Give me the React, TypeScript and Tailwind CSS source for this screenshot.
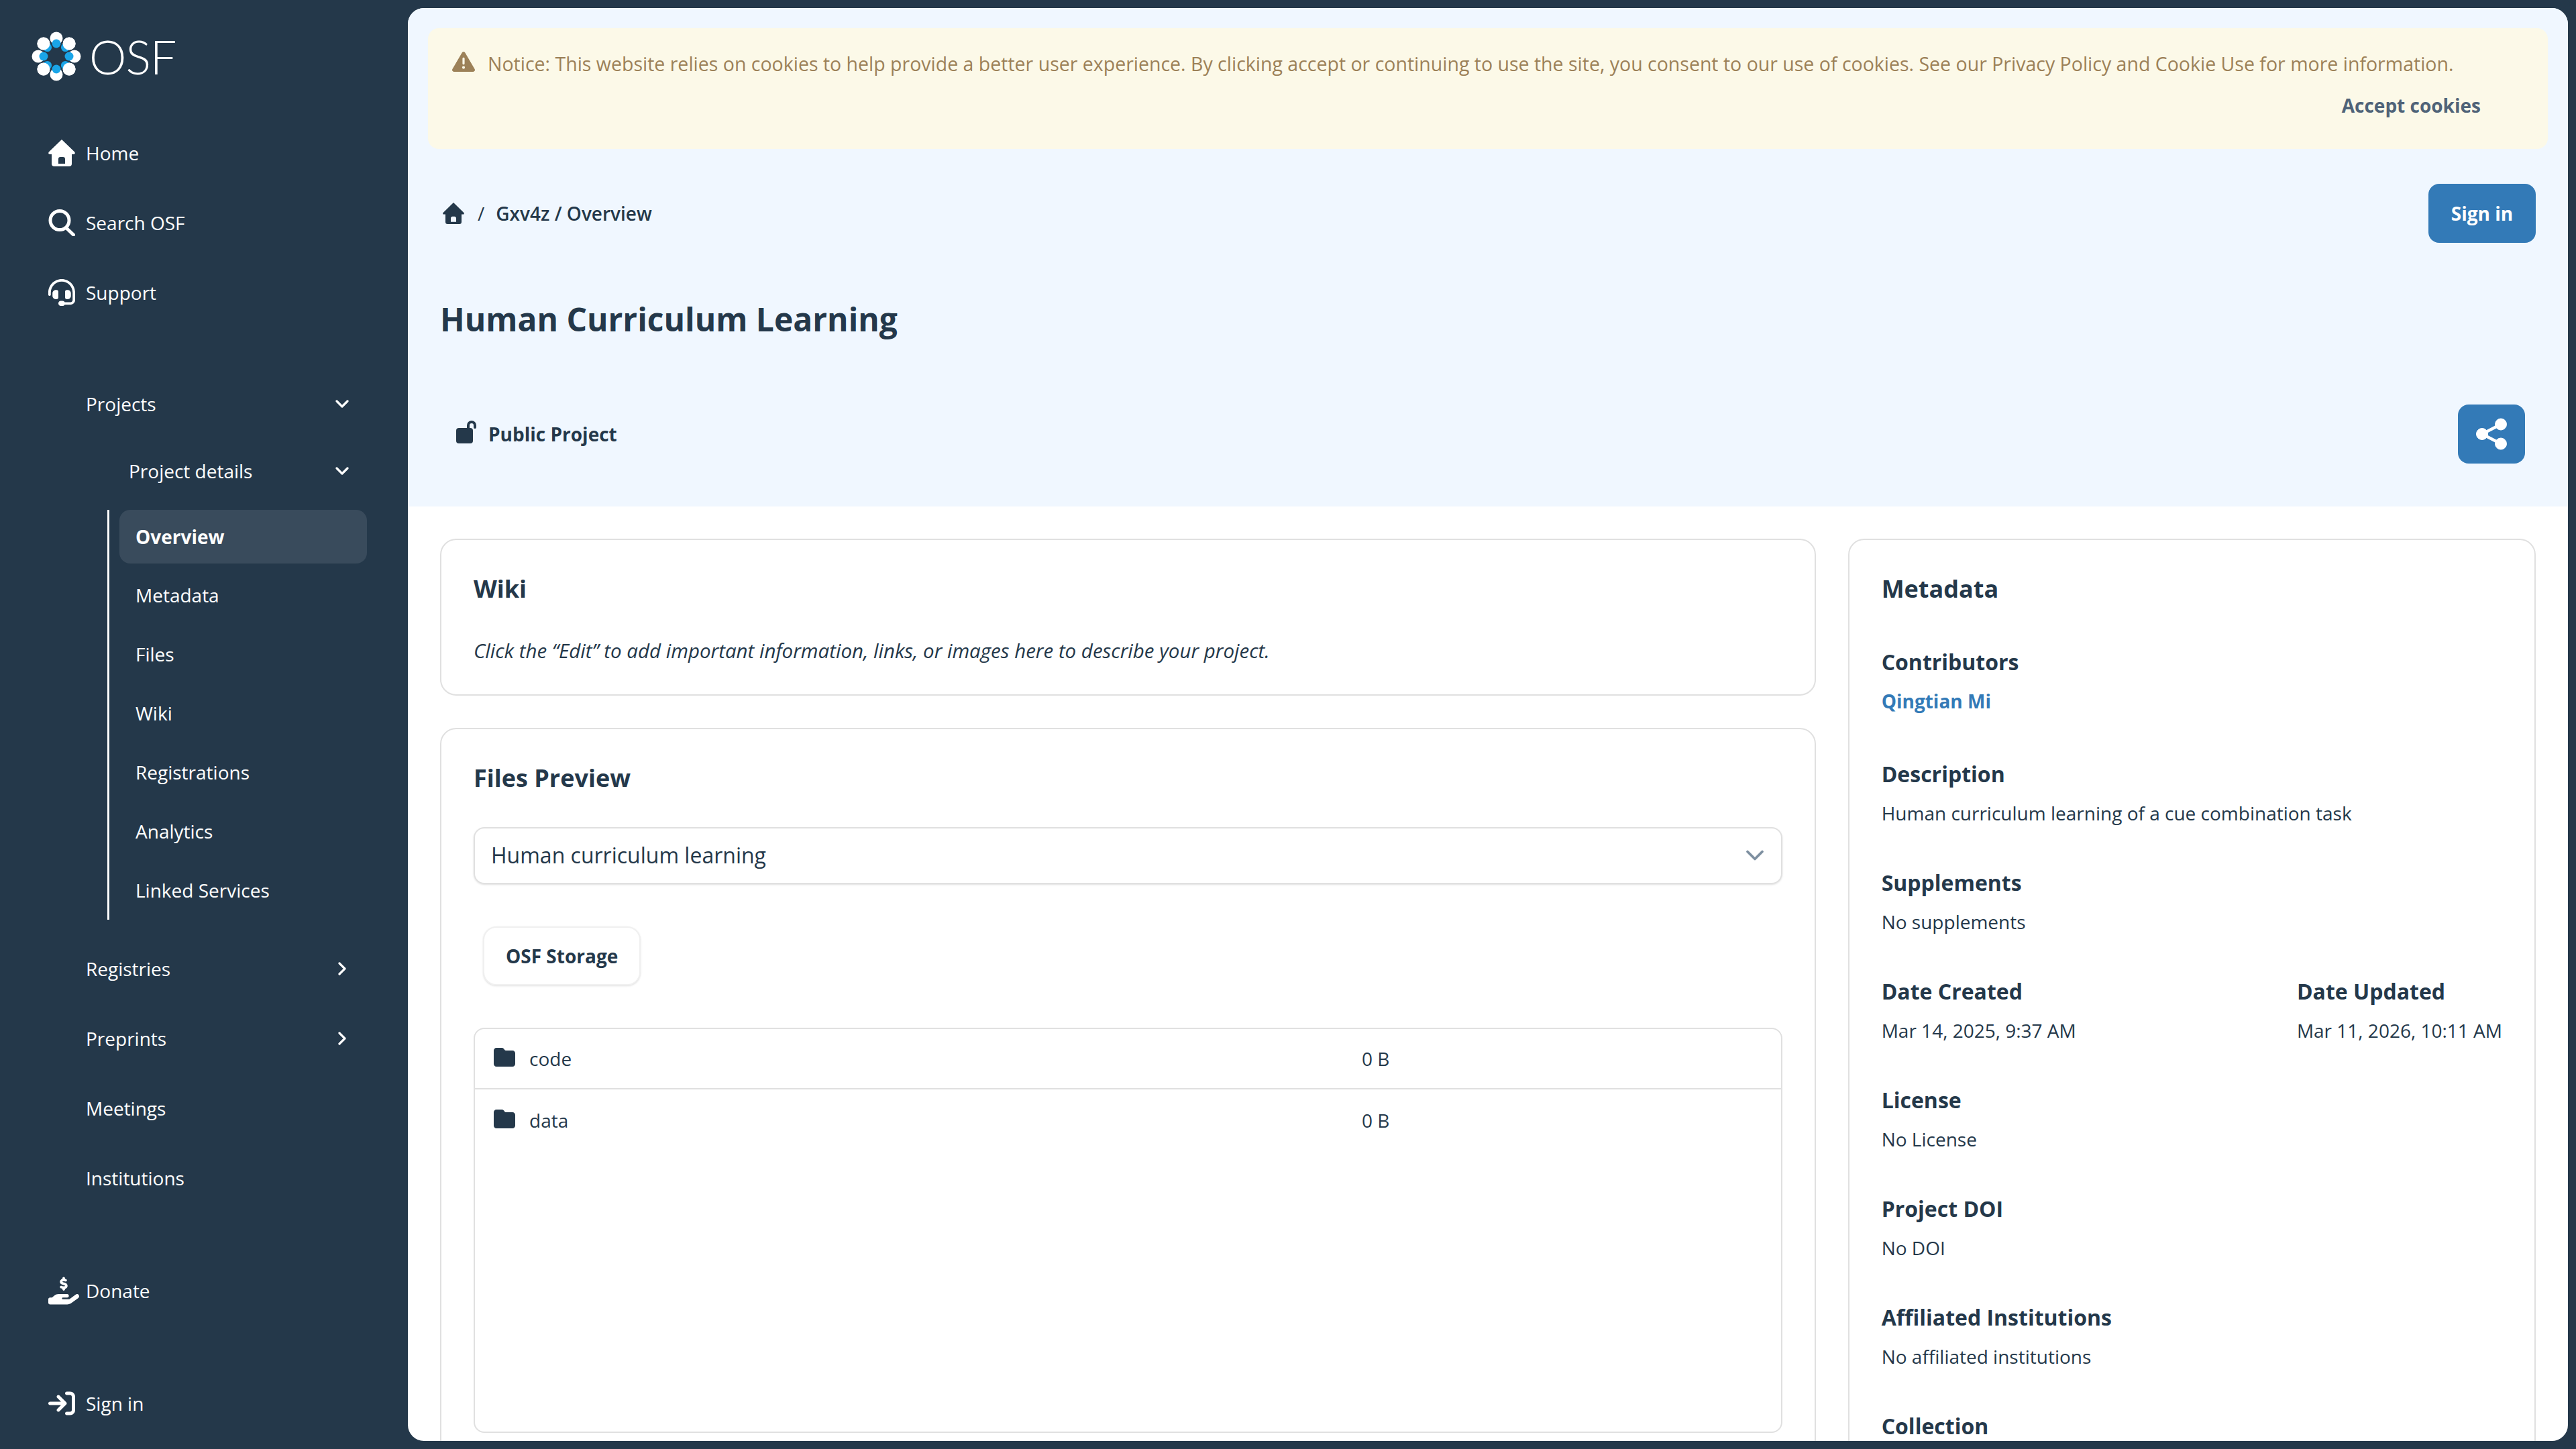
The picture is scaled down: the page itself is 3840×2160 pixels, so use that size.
import React from "react";
import {
  FaArrowRightToBracket,
  FaFolder,
  FaHandHoldingDollar,
  FaHeadset,
  FaTriangleExclamation,
} from "react-icons/fa6";
import { ChevronDown, ChevronRight } from "lucide-react";

const projectLinks = ["Metadata", "Files", "Wiki", "Registrations", "Analytics", "Linked Services"];

const OsfLogo = () => {
  const angles = [0, 45, 90, 135, 180, 225, 270, 315];
  return (
    <svg width="76" height="76" viewBox="-38 -38 76 76" className="shrink-0">
      {angles.map((a) => (
        <g key={a} transform={`rotate(${a})`}>
          <circle cx="0" cy="-27" r="9.5" fill="#fff" />
          <circle cx="0" cy="-19" r="6.5" fill="#1aa5e8" />
        </g>
      ))}
      {angles
        .filter((a) => a % 90 !== 0)
        .map((a) => (
          <circle key={a} cx="0" cy="-27" r="9.5" fill="#fff" transform={`rotate(${a})`} />
        ))}
    </svg>
  );
};

const HomeIcon = ({ size }: { size: number }) => (
  <svg width={size} height={size} viewBox="0 0 40 40" fill="currentColor" fillRule="evenodd">
    <path d="M20 0 L39.2 18.6 Q41 22 37.5 22 H35 V36 Q35 40 31 40 H9 Q5 40 5 36 V22 H2.5 Q-1 22 .8 18.6 Z M15 36 H25 V29 Q25 26 22 26 H18 Q15 26 15 29 Z" />
  </svg>
);

const SearchIcon = () => (
  <svg width="40" height="40" viewBox="0 0 40 40" fill="none" stroke="#fff" strokeWidth="5" strokeLinecap="round">
    <circle cx="17" cy="16.5" r="14" />
    <path d="M27 28 L37.5 38" />
  </svg>
);

const UnlockIcon = () => (
  <svg width="30" height="34" viewBox="0 0 30 34" fill="none" className="mb-[6px] mr-[18px] shrink-0">
    <rect x="0" y="11" width="25" height="23" rx="4" fill="currentColor" />
    <path d="M18 12 V7 a5 5 0 0 1 10 0 V10" stroke="currentColor" strokeWidth="4" strokeLinecap="round" />
  </svg>
);

const ShareIcon = () => (
  <svg width="46" height="48" viewBox="0 0 46 48" fill="#fff" stroke="#fff">
    <path d="M9 24 L37 9.5 M9 24 L37 38.5" strokeWidth="4.5" fill="none" />
    <circle cx="9" cy="24" r="8.5" />
    <circle cx="37" cy="9.5" r="8.5" />
    <circle cx="37" cy="38.5" r="8.5" />
  </svg>
);

const MainNav = ({ icon, label }: { icon: React.ReactNode; label: string }) => (
  <div className="flex h-[104px] items-center pl-[72px]">
    <span className="flex w-[56px] shrink-0 items-center">{icon}</span>
    <span>{label}</span>
  </div>
);

const SubNav = ({ label, chevron }: { label: string; chevron?: "down" | "right" }) => (
  <div className="flex h-[104px] items-center justify-between pl-[128px] pr-[82px]">
    <span>{label}</span>
    {chevron === "down" && <ChevronDown size={32} strokeWidth={2.4} />}
    {chevron === "right" && <ChevronRight size={32} strokeWidth={2.4} />}
  </div>
);

const Card = ({ className = "", children }: { className?: string; children: React.ReactNode }) => (
  <div className={`rounded-[24px] border-2 border-[#e0e0e0] bg-white p-[48px] ${className}`}>{children}</div>
);

const MetaItem = ({ label, children }: { label: string; children?: React.ReactNode }) => (
  <div>
    <h3 className="text-[32px] leading-[44px] font-bold">{label}</h3>
    {children && <div className="mt-[16px] leading-[40px]">{children}</div>}
  </div>
);

const FileRow = ({ name, last }: { name: string; last?: boolean }) => (
  <div className={`flex items-center px-[28px] ${last ? "h-[92px]" : "h-[90px] border-b-2 border-[#e0e0e0]"}`}>
    <FaFolder size={32} className="mb-[4px] mr-[21px] shrink-0" />
    <span className="w-[1241px]">{name}</span>
    <span>0 B</span>
  </div>
);

export default function App() {
  return (
    <div className="flex h-[2160px] w-[3840px] overflow-hidden bg-[#24384a] font-['Open_Sans',sans-serif] text-[28px] text-[#24384a]">
      {/* sidebar */}
      <aside className="flex w-[608px] shrink-0 flex-col text-white">
        <div className="flex h-[124px] items-center pl-[46px] pt-[44px]">
          <OsfLogo />
          <span className="ml-[11px] font-['Lato',sans-serif] text-[70px] leading-none font-light tracking-[-1px]">OSF</span>
        </div>
        <div className="mt-[52px]">
          <MainNav icon={<HomeIcon size={40} />} label="Home" />
          <MainNav icon={<SearchIcon />} label="Search OSF" />
          <MainNav icon={<FaHeadset size={40} />} label="Support" />
        </div>
        <div className="mt-[62px]">
          <SubNav label="Projects" chevron="down" />
          <div className="flex h-[96px] items-center justify-between pl-[192px] pr-[82px]">
            <span>Project details</span>
            <ChevronDown size={32} strokeWidth={2.4} />
          </div>
          <div className="ml-[160px] mt-[10px] border-l-[3px] border-white pl-[15px]">
            <div className="mb-[3px] mr-[61px] flex h-[80px] items-center rounded-[16px] bg-[#394b5c] pl-[24px] font-bold">Overview</div>
            {projectLinks.map((l) => (
              <div key={l} className="flex h-[88px] items-center pl-[24px]">
                {l}
              </div>
            ))}
          </div>
        </div>
        <div className="mt-[21px]">
          <SubNav label="Registries" chevron="right" />
          <SubNav label="Preprints" chevron="right" />
          <SubNav label="Meetings" />
          <SubNav label="Institutions" />
        </div>
        <div className="mt-[64px]">
          <MainNav icon={<FaHandHoldingDollar size={46} />} label="Donate" />
        </div>
        <div className="mt-[64px]">
          <MainNav icon={<FaArrowRightToBracket size={40} />} label="Sign in" />
        </div>
      </aside>

      {/* main panel */}
      <main className="my-[12px] mr-[12px] flex-1 overflow-hidden rounded-[24px] bg-white">
        <section className="bg-[#f0f7ff] px-[30px] pt-[30px]">
          <div className="rounded-[16px] bg-[#fcf9e8] pb-[43px] pl-[36px] pr-[40px] pt-[32px] text-[#9c8158]">
            <div className="flex items-center text-[28.5px]">
              <FaTriangleExclamation size={34} className="mb-[6px] mr-[19px] shrink-0" />
              <span>
                Notice: This website relies on cookies to help provide a better user experience. By clicking accept or continuing to use the site, you consent to our use of cookies. See our Privacy Policy and Cookie Use for more information.
              </span>
            </div>
            <div className="mt-[18px] pr-[60px] text-right font-bold leading-[44px] text-[#4f6378]">Accept cookies</div>
          </div>
          <div className="mt-[52px] flex items-center justify-between pl-[22px] pr-[18px]">
            <div className="flex items-center">
              <HomeIcon size={32} />
              <span className="ml-[20px]">/</span>
              <span className="ml-[17px] font-semibold">Gxv4z / Overview</span>
            </div>
            <button className="h-[88px] w-[160px] rounded-[16px] bg-[#337ab7] font-bold text-white">Sign in</button>
          </div>
          <h1 className="ml-[18px] mt-[79px] text-[48px] leading-[70px] font-bold">Human Curriculum Learning</h1>
          <div className="mt-[92px] flex items-center justify-between pb-[64px] pl-[42px] pr-[34px]">
            <div className="flex items-center font-bold">
              <UnlockIcon />
              Public Project
            </div>
            <button className="flex h-[88px] w-[100px] items-center justify-center rounded-[16px] bg-[#337ab7] text-white">
              <ShareIcon />
            </button>
          </div>
        </section>

        <section className="grid grid-cols-[2fr_1fr] gap-[48px] px-[48px] pt-[48px]">
          <div className="flex flex-col gap-[48px]">
            <Card className="h-[234px]">
              <h2 className="text-[36px] leading-[50px] font-bold">Wiki</h2>
              <p className="mt-[45px] text-[29.5px] italic">
                Click the “Edit” to add important information, links, or images here to describe your project.
              </p>
            </Card>
            <Card>
              <h2 className="text-[36px] leading-[50px] font-bold">Files Preview</h2>
              <div className="mt-[48px] flex h-[85px] items-center justify-between rounded-[16px] border-2 border-[#e0e0e0] pl-[24px] pr-[17px] text-[32px] shadow-sm">
                Human curriculum learning
                <ChevronDown size={44} strokeWidth={2} className="text-[#7d8fa0]" />
              </div>
              <button className="ml-[14px] mt-[63px] h-[88px] rounded-[20px] border-2 border-[#f0f0f0] bg-white px-[32px] font-bold shadow-sm">OSF Storage</button>
              <div className="mt-[63px] h-[604px] rounded-[16px] border-2 border-[#e0e0e0]">
                <FileRow name="code" />
                <FileRow name="data" last />
              </div>
            </Card>
          </div>
          <Card className="h-[1400px]">
            <h2 className="text-[36px] leading-[50px] font-bold">Metadata</h2>
            <div className="mt-[62px] flex flex-col gap-[62px]">
              <MetaItem label="Contributors">
                <span className="mb-[5px] block font-bold text-[#337ab7]">Qingtian Mi</span>
              </MetaItem>
              <MetaItem label="Description">Human curriculum learning of a cue combination task</MetaItem>
              <MetaItem label="Supplements">No supplements</MetaItem>
              <div className="flex justify-between">
                <MetaItem label="Date Created">Mar 14, 2025, 9:37 AM</MetaItem>
                <MetaItem label="Date Updated">Mar 11, 2026, 10:11 AM</MetaItem>
              </div>
              <MetaItem label="License">No License</MetaItem>
              <MetaItem label="Project DOI">No DOI</MetaItem>
              <MetaItem label="Affiliated Institutions">No affiliated institutions</MetaItem>
              <MetaItem label="Collection" />
            </div>
          </Card>
        </section>
      </main>
    </div>
  );
}
